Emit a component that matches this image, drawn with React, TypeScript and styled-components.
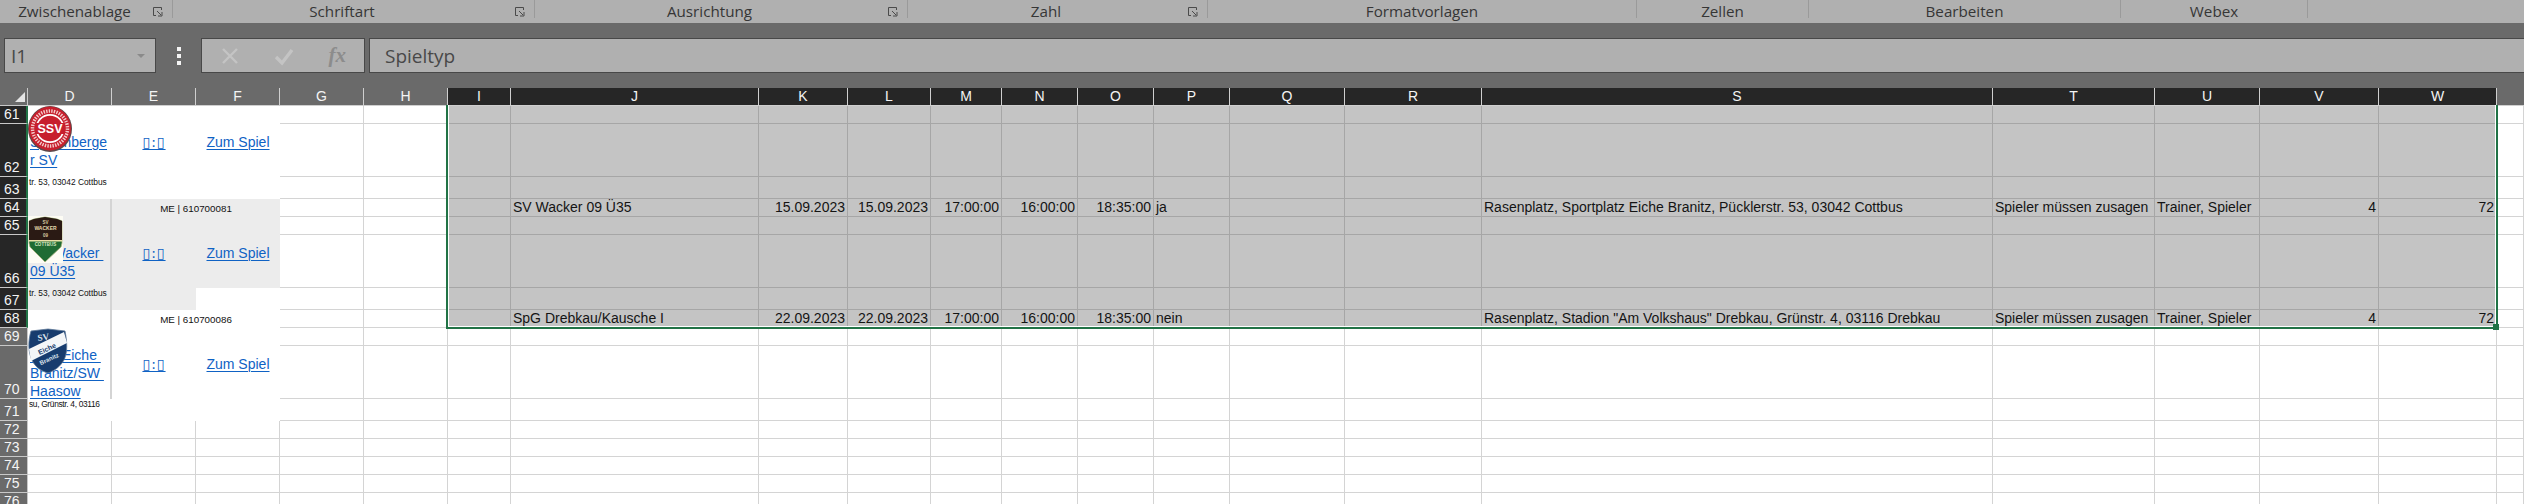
import React from "react";
import styled, { createGlobalStyle } from "styled-components";

const Global = createGlobalStyle`
  html, body { margin: 0; padding: 0; background: #fff; overflow: hidden; }
  #root { width: 2524px; height: 504px; overflow: hidden; }
`;

const Page = styled.div`
  width: 2524px;
  height: 504px;
  overflow: hidden;
  display: flex;
  flex-direction: column;
  font-family: "Liberation Sans", Arial, sans-serif;
`;

/* ---------- ribbon ---------- */
const Ribbon = styled.div`
  height: 23px;
  flex: none;
  display: flex;
  background: #b0b0b0;
  font-family: "Open Sans", "Noto Sans", sans-serif;
  font-size: 15.2px;
  color: #363636;
`;
const Group = styled.div<{ $width: number }>`
  width: ${(p) => p.$width}px;
  height: 18px;
  flex: none;
  display: flex;
  align-items: center;
  box-sizing: border-box;
  border-right: 1px solid #9a9a9a;
`;
const GroupLabel = styled.span`
  flex: 1;
  text-align: center;
  line-height: 22px;
  position: relative;
  top: 2px;
`;
const Launcher = styled.svg`
  width: 10px;
  height: 10px;
  flex: none;
  margin: 5px 9px 0 4px;
`;

/* ---------- formula bar ---------- */
const FormulaBar = styled.div`
  height: 65px;
  flex: none;
  box-sizing: border-box;
  padding: 15px 0 15px 4px;
  display: flex;
  background: #6a6a6a;
`;
const Box = styled.div`
  box-sizing: border-box;
  height: 35px;
  background: #b0b0b0;
  border: 1px solid #484848;
  display: flex;
  align-items: center;
  color: #484848;
  font-family: "Open Sans", "Noto Sans", sans-serif;
  font-size: 19px;
`;
const NameBox = styled(Box)`
  width: 152px;
  flex: none;
  padding: 0 10px 0 6px;
  justify-content: space-between;
`;
const Caret = styled.span`
  width: 0;
  height: 0;
  border-left: 4px solid transparent;
  border-right: 4px solid transparent;
  border-top: 4px solid #8a8a8a;
`;
const Dots = styled.div`
  width: 45px;
  flex: none;
  display: flex;
  flex-direction: column;
  align-items: center;
  justify-content: center;
  gap: 3px;
`;
const Dot = styled.span`
  width: 4px;
  height: 4px;
  background: #f4f4f4;
`;
const FxBox = styled(Box)`
  width: 164px;
  flex: none;
  padding: 0 18px 0 18px;
  justify-content: space-between;
`;
const FxIcon = styled.svg`
  width: 20px;
  height: 20px;
  flex: none;
`;
const FxLabel = styled.span`
  font-family: "Liberation Serif", serif;
  font-style: italic;
  font-weight: 700;
  font-size: 21px;
  color: #8c8c8c;
`;
const ContentBox = styled(Box)`
  flex: 1;
  margin-left: 4px;
  padding-left: 15px;
  border-right: none;
`;

/* ---------- sheet ---------- */
const columnEnds = [112, 196, 280, 364, 448, 511, 759, 848, 931, 1002, 1078, 1154, 1230, 1345, 1482, 1993, 2155, 2260, 2379, 2497];
const columnNames = "DEFGHIJKLMNOPQRSTUVW".split("");
const columnWidths = columnEnds.map((e, i) => e - (i === 0 ? 28 : columnEnds[i - 1]));
const rowHeights = [18, 53, 22, 18, 18, 53, 22, 18, 18, 53, 22, 18, 18, 18, 18, 18];

const Sheet = styled.div`
  position: relative;
  display: grid;
  grid-template-columns: 28px ${columnWidths.map((w) => `${w}px`).join(" ")} 27px;
  grid-template-rows: 18px ${rowHeights.map((h) => `${h}px`).join(" ")};
  font-size: 14px;
  color: #141414;
`;
const Corner = styled.div`
  background: #6a6a6a;
  box-sizing: border-box;
  border-right: 1px solid #c8c8c8;
  border-bottom: 1px solid #c8c8c8;
  position: relative;
  display: flex;
  align-items: center;
  padding-left: 15px;
`;
const CornerMark = styled.svg`
  width: 10px;
  height: 10px;
`;
const ColumnHead = styled.div<{ $active: boolean }>`
  box-sizing: border-box;
  background: ${(p) => (p.$active ? "#262626" : "#6a6a6a")};
  border-right: 1px solid #cfcfcf;
  border-bottom: 1px solid #cfcfcf;
  color: #f4f4f4;
  text-align: center;
  line-height: 17px;
`;
const HeadRest = styled.div`
  background: #6a6a6a;
  box-sizing: border-box;
  border-bottom: 1px solid #cfcfcf;
`;
const RowHead = styled.div<{ $active: boolean }>`
  box-sizing: border-box;
  background: ${(p) => (p.$active ? "#262626" : "#6a6a6a")};
  border-bottom: 1px solid #c8c8c8;
  border-right: ${(p) => (p.$active ? "2px solid #217346" : "1px solid #c8c8c8")};
  color: #f4f4f4;
  display: flex;
  align-items: flex-end;
  padding-left: 4px;
  line-height: 17px;
`;
const Cell = styled.div<{ $selected?: boolean; $align?: string }>`
  box-sizing: border-box;
  background: ${(p) => (p.$selected ? "#c4c4c4" : "#fff")};
  border-right: 1px solid ${(p) => (p.$selected ? "#a6a6a6" : "#d4d4d4")};
  border-bottom: 1px solid ${(p) => (p.$selected ? "#a6a6a6" : "#d4d4d4")};
  display: flex;
  align-items: center;
  justify-content: ${(p) => (p.$align === "right" ? "flex-end" : "flex-start")};
  padding: 0 2px 0 2px;
  white-space: nowrap;
  line-height: 17px;
`;
const Pasted = styled.div<{ $shade?: boolean; $divider?: boolean; $span?: number; $center?: boolean; $top?: boolean }>`
  position: relative;
  box-sizing: border-box;
  background: ${(p) => (p.$shade ? "#ececec" : "#fff")};
  border-right: ${(p) => (p.$divider ? "2px solid #d4d4d4" : "none")};
  grid-column: span ${(p) => p.$span ?? 1};
  display: flex;
  align-items: ${(p) => (p.$top ? "flex-start" : "center")};
  padding-top: ${(p) => (p.$top ? "9px" : "0")};
  justify-content: ${(p) => (p.$center ? "center" : "flex-start")};
`;
const Link = styled.a`
  color: #0f62c4;
  text-decoration: underline;
  text-decoration-thickness: 1px;
  text-underline-offset: 2px;
  line-height: 18px;
  white-space: pre;
`;
const TeamLink = styled(Link)`
  padding-left: 2px;
`;
const Tofu = styled(Link)`
  font-family: "DejaVu Sans", sans-serif;
  font-size: 14px;
  letter-spacing: 1px;
`;
const Code = styled.span`
  font-size: 9.8px;
  color: #111;
`;
const Address = styled.span<{ $tight?: boolean }>`
  position: absolute;
  left: 1px;
  top: -1px;
  font-size: 8.4px;
  letter-spacing: ${(p) => (p.$tight ? "-0.33px" : "0")};
  line-height: 13px;
  color: #111;
  white-space: nowrap;
`;
const Logo = styled.svg`
  position: absolute;
  left: 0;
  z-index: 2;
`;
const Selection = styled.div`
  position: absolute;
  left: 446px;
  top: 17px;
  width: 2052px;
  height: 224px;
  box-sizing: border-box;
  border: 2px solid #217346;
  border-top: none;
  pointer-events: none;
  z-index: 3;
  &::before {
    content: "";
    position: absolute;
    inset: 0;
    border: 1px solid #fff;
    border-top: none;
  }
`;
const Handle = styled.span`
  position: absolute;
  right: -3px;
  bottom: -3px;
  width: 6px;
  height: 6px;
  background: #217346;
  z-index: 1;
`;

const LauncherIcon = () => (
  <Launcher viewBox="0 0 10 10">
    <path d="M8.5 3V.5H.5V8.5H3" fill="none" stroke="#4a4a4a" />
    <path d="M4 4L8 8M9 5V9H5" fill="none" stroke="#4a4a4a" strokeWidth="1" />
  </Launcher>
);

const SsvLogo = () => (
  <Logo width="44" height="46" viewBox="0 0 44 46" style={{ top: 0 }}>
    <ellipse cx="22" cy="23" rx="22" ry="23" fill="#5d4a4a" />
    <ellipse cx="22" cy="22.5" rx="21" ry="22" fill="#c71f2d" />
    <circle cx="22" cy="22.5" r="17.5" fill="none" stroke="#f3c9c9" strokeWidth="3.5" strokeDasharray="1.4 1.2" />
    <circle cx="22" cy="22.5" r="14.5" fill="#fff" />
    <circle cx="22" cy="22.5" r="12.8" fill="#c71f2d" />
    <rect x="7" y="17" width="30" height="11" fill="#c71f2d" />
    <text x="22" y="27" textAnchor="middle" fontFamily="Liberation Sans, sans-serif" fontWeight="700" fontSize="12.5" fill="#fff">SSV</text>
  </Logo>
);
const WackerLogo = () => (
  <Logo width="35" height="47" viewBox="0 0 35 47" style={{ top: -1 }}>
    <rect width="35" height="47" fill="#fdfcf4" />
    <path d="M1 5L6 3 17 1 29 3 34 5V27L33 31 17 46 2 31 1 27Z" fill="#1f6b33" stroke="#a9b27c" strokeWidth="0.8" />
    <path d="M1 5L6 3 17 1 29 3 34 5V24H1Z" fill="#2a1a14" />
    <rect x="1" y="24" width="33" height="1.5" fill="#e9e0a8" />
    <text x="17.5" y="8" textAnchor="middle" fontFamily="Liberation Sans, sans-serif" fontWeight="700" fontSize="4.5" fill="#d8c9a0">SV</text>
    <text x="17.5" y="14" textAnchor="middle" fontFamily="Liberation Sans, sans-serif" fontWeight="700" fontSize="5" fill="#e6d8ae">WACKER</text>
    <text x="17.5" y="21" textAnchor="middle" fontFamily="Liberation Sans, sans-serif" fontWeight="700" fontSize="4.5" fill="#d8c9a0">09</text>
    <text x="17.5" y="30" textAnchor="middle" fontFamily="Liberation Sans, sans-serif" fontWeight="700" fontSize="4.5" fill="#d8e6c0">COTTBUS</text>
  </Logo>
);
const HaasowLogo = () => (
  <Logo width="40" height="46" viewBox="0 0 40 46" style={{ top: 0 }}>
    <path d="M3 3L20 1 37 3C39 13 40 24 36 32 32 39 26 43 20 45 13 43 7 39 4 32 0 24 0 13 3 3Z" fill="#173c6e" stroke="#5d7797" strokeWidth="0.8" />
    <path d="M1 21L36 4 39 15 3 33Z" fill="#f4f6f8" />
    <text x="10" y="13" fontFamily="Liberation Serif, serif" fontWeight="700" fontSize="9" fill="#dfe6ee" transform="rotate(-8 10 13)">SV</text>
    <text x="20" y="23" textAnchor="middle" fontFamily="Liberation Sans, sans-serif" fontWeight="700" fontSize="7" fill="#173c6e" transform="rotate(-25 20 23)">Eiche</text>
    <text x="22" y="33" textAnchor="middle" fontFamily="Liberation Sans, sans-serif" fontWeight="700" fontSize="6" fill="#dfe6ee" transform="rotate(-25 22 33)">Branitz</text>
  </Logo>
);

const tofuLink = "\u25AF:\u25AF";

const pastedRows: Record<number, React.ReactNode> = {
  0: (
    <>
      <Pasted><SsvLogo /></Pasted>
      <Pasted />
      <Pasted />
    </>
  ),
  1: (
    <>
      <Pasted><TeamLink>{"Spremberge\nr SV"}</TeamLink></Pasted>
      <Pasted $center $top><Tofu>{tofuLink}</Tofu></Pasted>
      <Pasted $center $top><Link>Zum Spiel</Link></Pasted>
    </>
  ),
  2: (
    <>
      <Pasted><Address>tr. 53, 03042 Cottbus</Address></Pasted>
      <Pasted />
      <Pasted />
    </>
  ),
  3: (
    <>
      <Pasted $shade $divider />
      <Pasted $shade $span={2} $center><Code>ME | 610700081</Code></Pasted>
    </>
  ),
  4: (
    <>
      <Pasted $shade $divider><WackerLogo /></Pasted>
      <Pasted $shade />
      <Pasted $shade />
    </>
  ),
  5: (
    <>
      <Pasted $shade $divider><TeamLink>{"SV Wacker \n09 Ü35"}</TeamLink></Pasted>
      <Pasted $shade $center $top><Tofu>{tofuLink}</Tofu></Pasted>
      <Pasted $shade $center $top><Link>Zum Spiel</Link></Pasted>
    </>
  ),
  6: (
    <>
      <Pasted $shade $divider><Address>tr. 53, 03042 Cottbus</Address></Pasted>
      <Pasted $shade />
      <Pasted />
    </>
  ),
  7: (
    <>
      <Pasted $divider />
      <Pasted $span={2} $center><Code>ME | 610700086</Code></Pasted>
    </>
  ),
  8: (
    <>
      <Pasted $divider><HaasowLogo /></Pasted>
      <Pasted />
      <Pasted />
    </>
  ),
  9: (
    <>
      <Pasted $divider><TeamLink>{"SpG Eiche \nBranitz/SW \nHaasow"}</TeamLink></Pasted>
      <Pasted $center $top><Tofu>{tofuLink}</Tofu></Pasted>
      <Pasted $center $top><Link>Zum Spiel</Link></Pasted>
    </>
  ),
  10: (
    <>
      <Pasted><Address $tight>su, Grünstr. 4, 03116</Address></Pasted>
      <Pasted />
      <Pasted />
    </>
  ),
};

type Entry = { text: string; right?: boolean };
const record = (team: string, date: string, reply: string, place: string): Record<string, Entry> => ({
  J: { text: team },
  K: { text: date, right: true },
  L: { text: date, right: true },
  M: { text: "17:00:00", right: true },
  N: { text: "16:00:00", right: true },
  O: { text: "18:35:00", right: true },
  P: { text: reply },
  S: { text: place },
  T: { text: "Spieler müssen zusagen" },
  U: { text: "Trainer, Spieler" },
  V: { text: "4", right: true },
  W: { text: "72", right: true },
});
const records: Record<number, Record<string, Entry>> = {
  3: record("SV Wacker 09 Ü35", "15.09.2023", "ja", "Rasenplatz, Sportplatz Eiche Branitz, Pücklerstr. 53, 03042 Cottbus"),
  7: record("SpG Drebkau/Kausche I", "22.09.2023", "nein", 'Rasenplatz, Stadion "Am Volkshaus" Drebkau, Grünstr. 4, 03116 Drebkau'),
};

const groups: { label: string; width: number; launcher?: boolean }[] = [
  { label: "Zwischenablage", width: 173, launcher: true },
  { label: "Schriftart", width: 362, launcher: true },
  { label: "Ausrichtung", width: 373, launcher: true },
  { label: "Zahl", width: 300, launcher: true },
  { label: "Formatvorlagen", width: 429 },
  { label: "Zellen", width: 172 },
  { label: "Bearbeiten", width: 312 },
  { label: "Webex", width: 187 },
];

export default function App() {
  return (
    <Page>
      <Global />
      <Ribbon>
        {groups.map((g) => (
          <Group key={g.label} $width={g.width}>
            <GroupLabel>{g.label}</GroupLabel>
            {g.launcher && <LauncherIcon />}
          </Group>
        ))}
      </Ribbon>
      <FormulaBar>
        <NameBox>
          <span>I1</span>
          <Caret />
        </NameBox>
        <Dots>
          <Dot />
          <Dot />
          <Dot />
        </Dots>
        <FxBox>
          <FxIcon viewBox="0 0 20 20">
            <path d="M3 3L17 17M17 3L3 17" stroke="#c4c4c4" strokeWidth="2.4" fill="none" />
          </FxIcon>
          <FxIcon viewBox="0 0 20 20">
            <path d="M2 11L8 17 18 4" stroke="#c4c4c4" strokeWidth="3.4" fill="none" />
          </FxIcon>
          <FxLabel>fx</FxLabel>
        </FxBox>
        <ContentBox>Spieltyp</ContentBox>
      </FormulaBar>
      <Sheet>
        <Corner>
          <CornerMark viewBox="0 0 10 10">
            <path d="M10 0V10H0Z" fill="#e4e4e4" />
          </CornerMark>
        </Corner>
        {columnNames.map((c, i) => (
          <ColumnHead key={c} $active={i >= 5}>{c}</ColumnHead>
        ))}
        <HeadRest />
        {rowHeights.map((_, r) => (
          <React.Fragment key={r}>
            <RowHead $active={r < 8}>{61 + r}</RowHead>
            {pastedRows[r] ?? (
              <>
                <Cell />
                <Cell />
                <Cell />
              </>
            )}
            {columnNames.slice(3).map((c, i) => {
              const entry = records[r]?.[c];
              return (
                <Cell key={c} $selected={r < 8 && i >= 2} $align={entry?.right ? "right" : "left"}>
                  {entry?.text}
                </Cell>
              );
            })}
            <Cell />
          </React.Fragment>
        ))}
        <Selection>
          <Handle />
        </Selection>
      </Sheet>
    </Page>
  );
}
